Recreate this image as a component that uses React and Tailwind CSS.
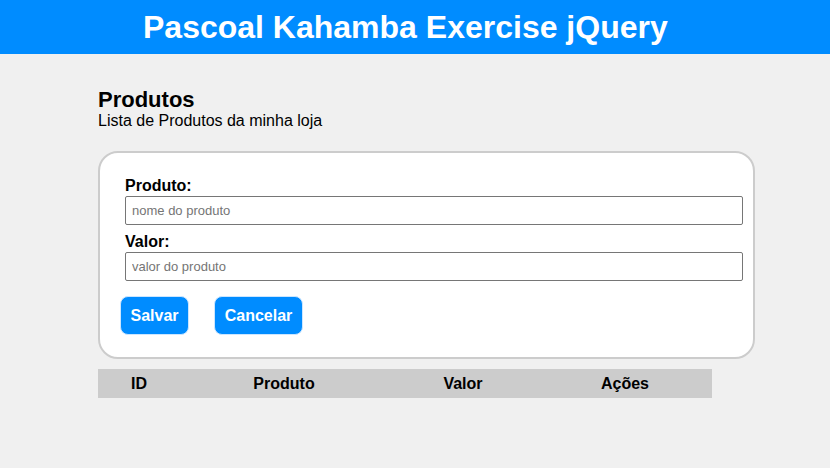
import React from "react";

const font = { fontFamily: '"Liberation Sans", Arial, sans-serif' };

export default function App() {
  return (
    <div className="min-h-[468px] bg-[#f0f0f0]" style={font}>
      <header className="h-[54px] bg-[#008cff] flex items-center pl-[143px]">
        <h1 className="text-white font-bold text-[32px] leading-none">Pascoal Kahamba Exercise jQuery</h1>
      </header>

      <main className="pl-[98px] pt-[34px]">
        <h2 className="text-[22px] font-bold leading-[24px] text-black">Produtos</h2>
        <p className="text-[16px] leading-[18px] text-black">Lista de Produtos da minha loja</p>

        <div className="mt-[21px] w-[657px] bg-white border-2 border-[#cccccc] rounded-[20px] pl-[25px] pr-[10px] pt-[24px] pb-[22px]">
          <label className="block text-[16px] font-bold leading-[18px] text-black">Produto:</label>
          <input
            type="text"
            placeholder="nome do produto"
            className="block w-[618px] h-[29px] mt-[1px] border border-[#767676] rounded-[2px] px-[6px] text-[13px] placeholder-[#757575] bg-white"
          />
          <label className="block mt-[8px] text-[16px] font-bold leading-[18px] text-black">Valor:</label>
          <input
            type="text"
            placeholder="valor do produto"
            className="block w-[618px] h-[29px] mt-[1px] border border-[#767676] rounded-[2px] px-[6px] text-[13px] placeholder-[#757575] bg-white"
          />
          <div className="flex gap-[25px] mt-[15px] -ml-[5px]">
            <button className="h-[39px] w-[69px] bg-[#008cff] text-white font-bold text-[16px] rounded-[8px] border border-[#cce6ff]">
              Salvar
            </button>
            <button className="h-[39px] w-[89px] bg-[#008cff] text-white font-bold text-[16px] rounded-[8px] border border-[#cce6ff]">
              Cancelar
            </button>
          </div>
        </div>

        <div className="mt-[10px] w-[614px] h-[29px] bg-[#cccccc] grid grid-cols-[82px_208px_150px_174px] items-center text-[16px] font-bold text-black">
          <div className="text-center">ID</div>
          <div className="text-center">Produto</div>
          <div className="text-center">Valor</div>
          <div className="text-center">Ações</div>
        </div>
      </main>
    </div>
  );
}
